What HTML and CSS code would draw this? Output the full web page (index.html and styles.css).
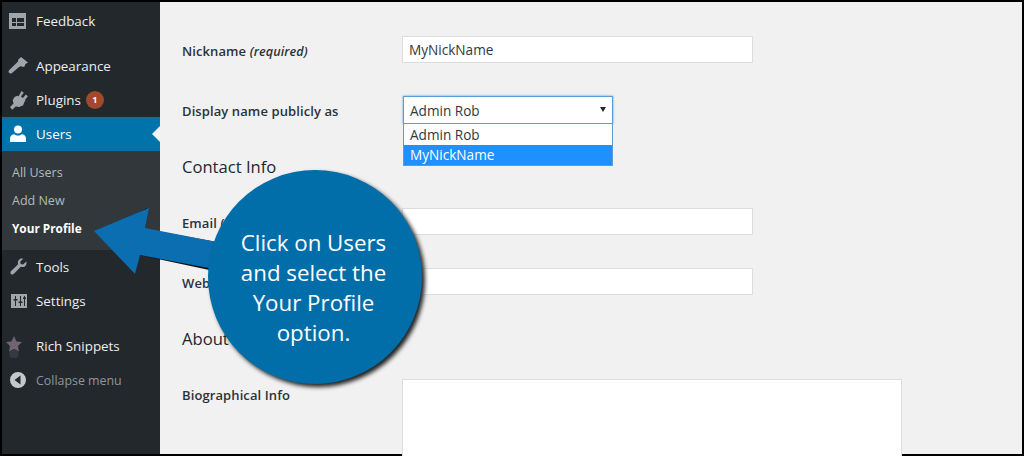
FILE: index.html
```html
<!DOCTYPE html>
<html lang="en">
<head>
<meta charset="utf-8">
<title>Your Profile</title>
<link rel="stylesheet" href="styles.css">
</head>
<body>
<div class="frame">
  <nav class="sidebar">
    <a class="item"><svg class="icon" viewBox="0 0 20 20"><path fill-rule="evenodd" d="M1 2h17v16H1zM4 7v4h4V7zM9 7v4h7V7zM4 12v3h4v-3zM9 12v3h7v-3z"/></svg><span>Feedback</span></a>
    <div class="sep"></div>
    <a class="item"><svg class="icon" viewBox="0 0 20 20"><path d="M13 1l7 5.500-2.500 1.500-1 2.500-2 .5-1.500-1-2.500 1.500-3-3.500 2.500-2.500.5-2.500 1-.5zM8 7.500l3 3.500-7 6c-1 .8-2.300.7-3-.2s-.6-2 .3-2.800z"/></svg><span>Appearance</span></a>
    <a class="item"><svg class="icon" viewBox="0 0 20 20"><path d="M13.500 1l2.300 1.800-2.900 3.700 2 1.600 3-3.600 2 1.700-3 3.800.7.600-1.300 1.500-1.100 3.200-4 1.800-3.500-.7-3.500 3.300L2 16.900l3.500-3.400-.8-3.300L6.500 7l3-1.200 1 .8z"/></svg><span>Plugins</span><b class="badge">1</b></a>
    <a class="item current"><svg class="icon" viewBox="0 0 20 20"><circle cx="10" cy="5.400" r="4"/><path d="M2 18v-3.500c0-2.500 2-4.200 4.300-4.200 1 .9 2.200 1.300 3.700 1.300s2.700-.4 3.700-1.300c2.300 0 4.300 1.700 4.300 4.200V18z"/></svg><span>Users</span></a>
    <div class="submenu">
      <a class="subitem">All Users</a>
      <a class="subitem">Add New</a>
      <a class="subitem active">Your Profile</a>
    </div>
    <a class="item"><svg class="icon" viewBox="0 0 20 20"><path d="M18.300 4.600c.6 2-.1 3.800-1.500 4.800-1.200.8-2.700.9-4 .4l-6.900 7c-.8.900-2.100.9-2.900.1s-.8-2.100.1-2.900l7-6.700c-.5-1.300-.4-2.900.5-4.100 1-1.300 2.700-2 4.600-1.400l-3 2.900.5 2.300 2.400.6z"/></svg><span>Tools</span></a>
    <a class="item"><svg class="icon" viewBox="0 0 20 20"><path fill-rule="evenodd" d="M3 3h16v14H3zM7 5v3H5.500v1.500H7V15h1V9.500h1.500V8H8V5zM12 5v5.500h-1.500V12H12v3h1v-3h1.500v-1.500H13V5zM16 5v1.500h-1V8h1v7h1V8h1V6.500h-1V5z"/></svg><span>Settings</span></a>
    <div class="sep"></div>
    <a class="item"><svg class="icon star" viewBox="0 0 20 20"><g transform="translate(0 3)"><path d="M6 -3l2.500 5.500 5.500.5-4 4 1 5.500L6 10l-5 2.500 1-5.500-4-4 5.500-.5z"/><path class="star-foot" d="M1.500 12.500L6 10l4.500 2.500V17l-1.500 2H3l-1.500-2z"/></g></svg><span>Rich Snippets</span></a>
    <a class="item collapse"><svg class="icon" viewBox="0 0 20 20"><path fill-rule="evenodd" d="M10 2a8 8 0 1 1 0 16 8 8 0 0 1 0-16zM12.500 5.500L6.500 10l6 4.500z"/></svg><span>Collapse menu</span></a>
  </nav>
  <main class="content">
    <div class="row row-nick">
      <label class="label">Nickname <em>(required)</em></label>
      <div class="input wide">MyNickName</div>
    </div>
    <div class="row row-display">
      <label class="label">Display name publicly as</label>
      <div class="select-wrap">
        <div class="select">Admin Rob<i class="caret"></i></div>
        <ul class="options">
          <li>Admin Rob</li>
          <li class="selected">MyNickName</li>
        </ul>
      </div>
    </div>
    <h2 class="heading">Contact Info</h2>
    <div class="row row-email">
      <label class="label">Email (required)</label>
      <div class="input wide"></div>
    </div>
    <div class="row row-web">
      <label class="label">Website</label>
      <div class="input wide"></div>
    </div>
    <h2 class="heading heading-about">About Yourself</h2>
    <div class="row row-bio">
      <label class="label">Biographical Info</label>
      <div class="textarea"></div>
    </div>
  </main>
  <div class="callout">
    <svg class="arrow" viewBox="0 0 140 80" width="140" height="80">
      <path class="arrow-shadow" d="M55 0L53 21 125 34 122 63 47 47 43 66 8 27z"/>
      <path class="arrow-body" d="M2 23L57 0 53 20 125 34 122 61 48 47 43 66z"/>
    </svg>
    <div class="bubble"><p class="bubble-text">Click on Users and select the Your Profile option.</p></div>
  </div>
</div>
</body>
</html>
```
FILE: styles.css
```css
* { box-sizing: border-box; }
html, body { margin: 0; height: 100%; background: #000; overflow: hidden; }
.frame {
  position: relative;
  display: flex;
  width: 1024px;
  height: 456px;
  padding: 2px 2px 2px 2px;
  background: #000;
  font-family: "Open Sans", "Noto Sans", sans-serif;
  font-size: 13px;
  color: #23282d;
  overflow: hidden;
}
.sidebar {
  flex: 0 0 158px;
  padding-top: 2px;
  background: #23282d;
  color: #eee;
}
.item {
  display: flex;
  align-items: center;
  height: 34px;
  padding-left: 6px;
  font-size: 13.4px;
}
.item span { margin-left: 8px; }
.icon { width: 20px; height: 20px; fill: #a0a5aa; flex: none; overflow: visible; }
.sep { height: 11px; }
.current { background: #0073aa; color: #fff; position: relative; }
.current .icon { fill: #fff; }
.current::after {
  content: "";
  position: absolute;
  right: 0;
  top: 9px;
  border: 8px solid transparent;
  border-right-color: #f1f1f1;
  border-left-width: 0;
}
.badge {
  width: 18px;
  height: 18px;
  margin-left: 5px;
  border-radius: 50%;
  background: #a3492a;
  color: #fff;
  font-size: 9px;
  line-height: 18px;
  text-align: center;
}
.submenu { padding: 8px 0 7px; background: #32373c; }
.subitem { display: block; height: 28px; padding-left: 10px; line-height: 28px; font-size: 12.5px; color: #b4b9be; }
.active { color: #fff; font-weight: 700; font-size: 11.8px; line-height: 26px; }
.star { fill: #6e6570; }
.star-foot { fill: #383840; }
.collapse { color: #8f959b; font-size: 12.4px; }
.collapse .icon { fill: #c4c8cc; }
.content {
  flex: 1;
  padding: 34px 0 0 22px;
  background: #f1f1f1;
}
.row { display: flex; align-items: center; }
.label { flex: 0 0 220px; padding-top: 2px; font-weight: 600; font-size: 13px; letter-spacing: .1px; color: #2c3338; }
.label em { font-style: italic; font-size: 12.6px; }
.input {
  height: 27px;
  padding: 0 6px;
  border: 1px solid #ddd;
  background: #fff;
  color: #32373c;
  font-size: 13.6px;
  line-height: 25px;
}
.wide { width: 351px; }
.row-display { margin-top: 33px; }
.select-wrap { position: relative; width: 210px; margin-left: 1px; }
.select {
  position: relative;
  height: 28px;
  padding-left: 6px;
  border: 1px solid #5b9dd9;
  background: #fff;
  color: #32373c;
  font-size: 13.6px;
  line-height: 27px;
  box-shadow: 0 0 2px rgba(30, 140, 190, .8);
}
.caret {
  position: absolute;
  right: 6px;
  top: 10px;
  border: 3px solid transparent;
  border-top: 5px solid #23282d;
  border-bottom-width: 0;
}
.options {
  position: absolute;
  left: 0;
  top: 28px;
  width: 210px;
  margin: 0;
  padding: 0;
  list-style: none;
  border: 1px solid #5b9dd9;
  border-top: 0;
  background: #fff;
  color: #32373c;
  font-size: 13.6px;
  line-height: 21px;
}
.options li { height: 21px; padding-left: 6px; }
.options .selected { height: 20px; line-height: 20px; background: #1e90ff; color: #fff; }
.heading { margin: 0; font-size: 16.6px; font-weight: 500; line-height: 22px; color: #23282d; }
.row-display + .heading { margin-top: 32px; }
.row-email { margin-top: 30px; }
.row-web { margin-top: 33px; }
.heading-about { margin-top: 33px; }
.row-bio { margin-top: 29px; align-items: flex-start; }
.row-bio .label { padding-top: 7px; }
.textarea { width: 500px; height: 120px; border: 1px solid #ddd; background: #fff; }
.callout { position: absolute; left: 92px; top: 168px; width: 340px; height: 225px; }
.arrow { position: absolute; left: 0; top: 40px; }
.arrow-shadow { fill: #111; }
.arrow-body { fill: #0a6eb0; }
.bubble {
  position: absolute;
  left: 116px;
  top: 2px;
  display: flex;
  align-items: center;
  justify-content: center;
  width: 214px;
  height: 214px;
  padding: 22px 28px 0 25px;
  border-radius: 50%;
  background: #026ea9;
  box-shadow: 3px 3px 4px #222;
  color: #fff;
  font-size: 22.3px;
  line-height: 30px;
  text-align: center;
}
.bubble-text { margin: 0; }
```
